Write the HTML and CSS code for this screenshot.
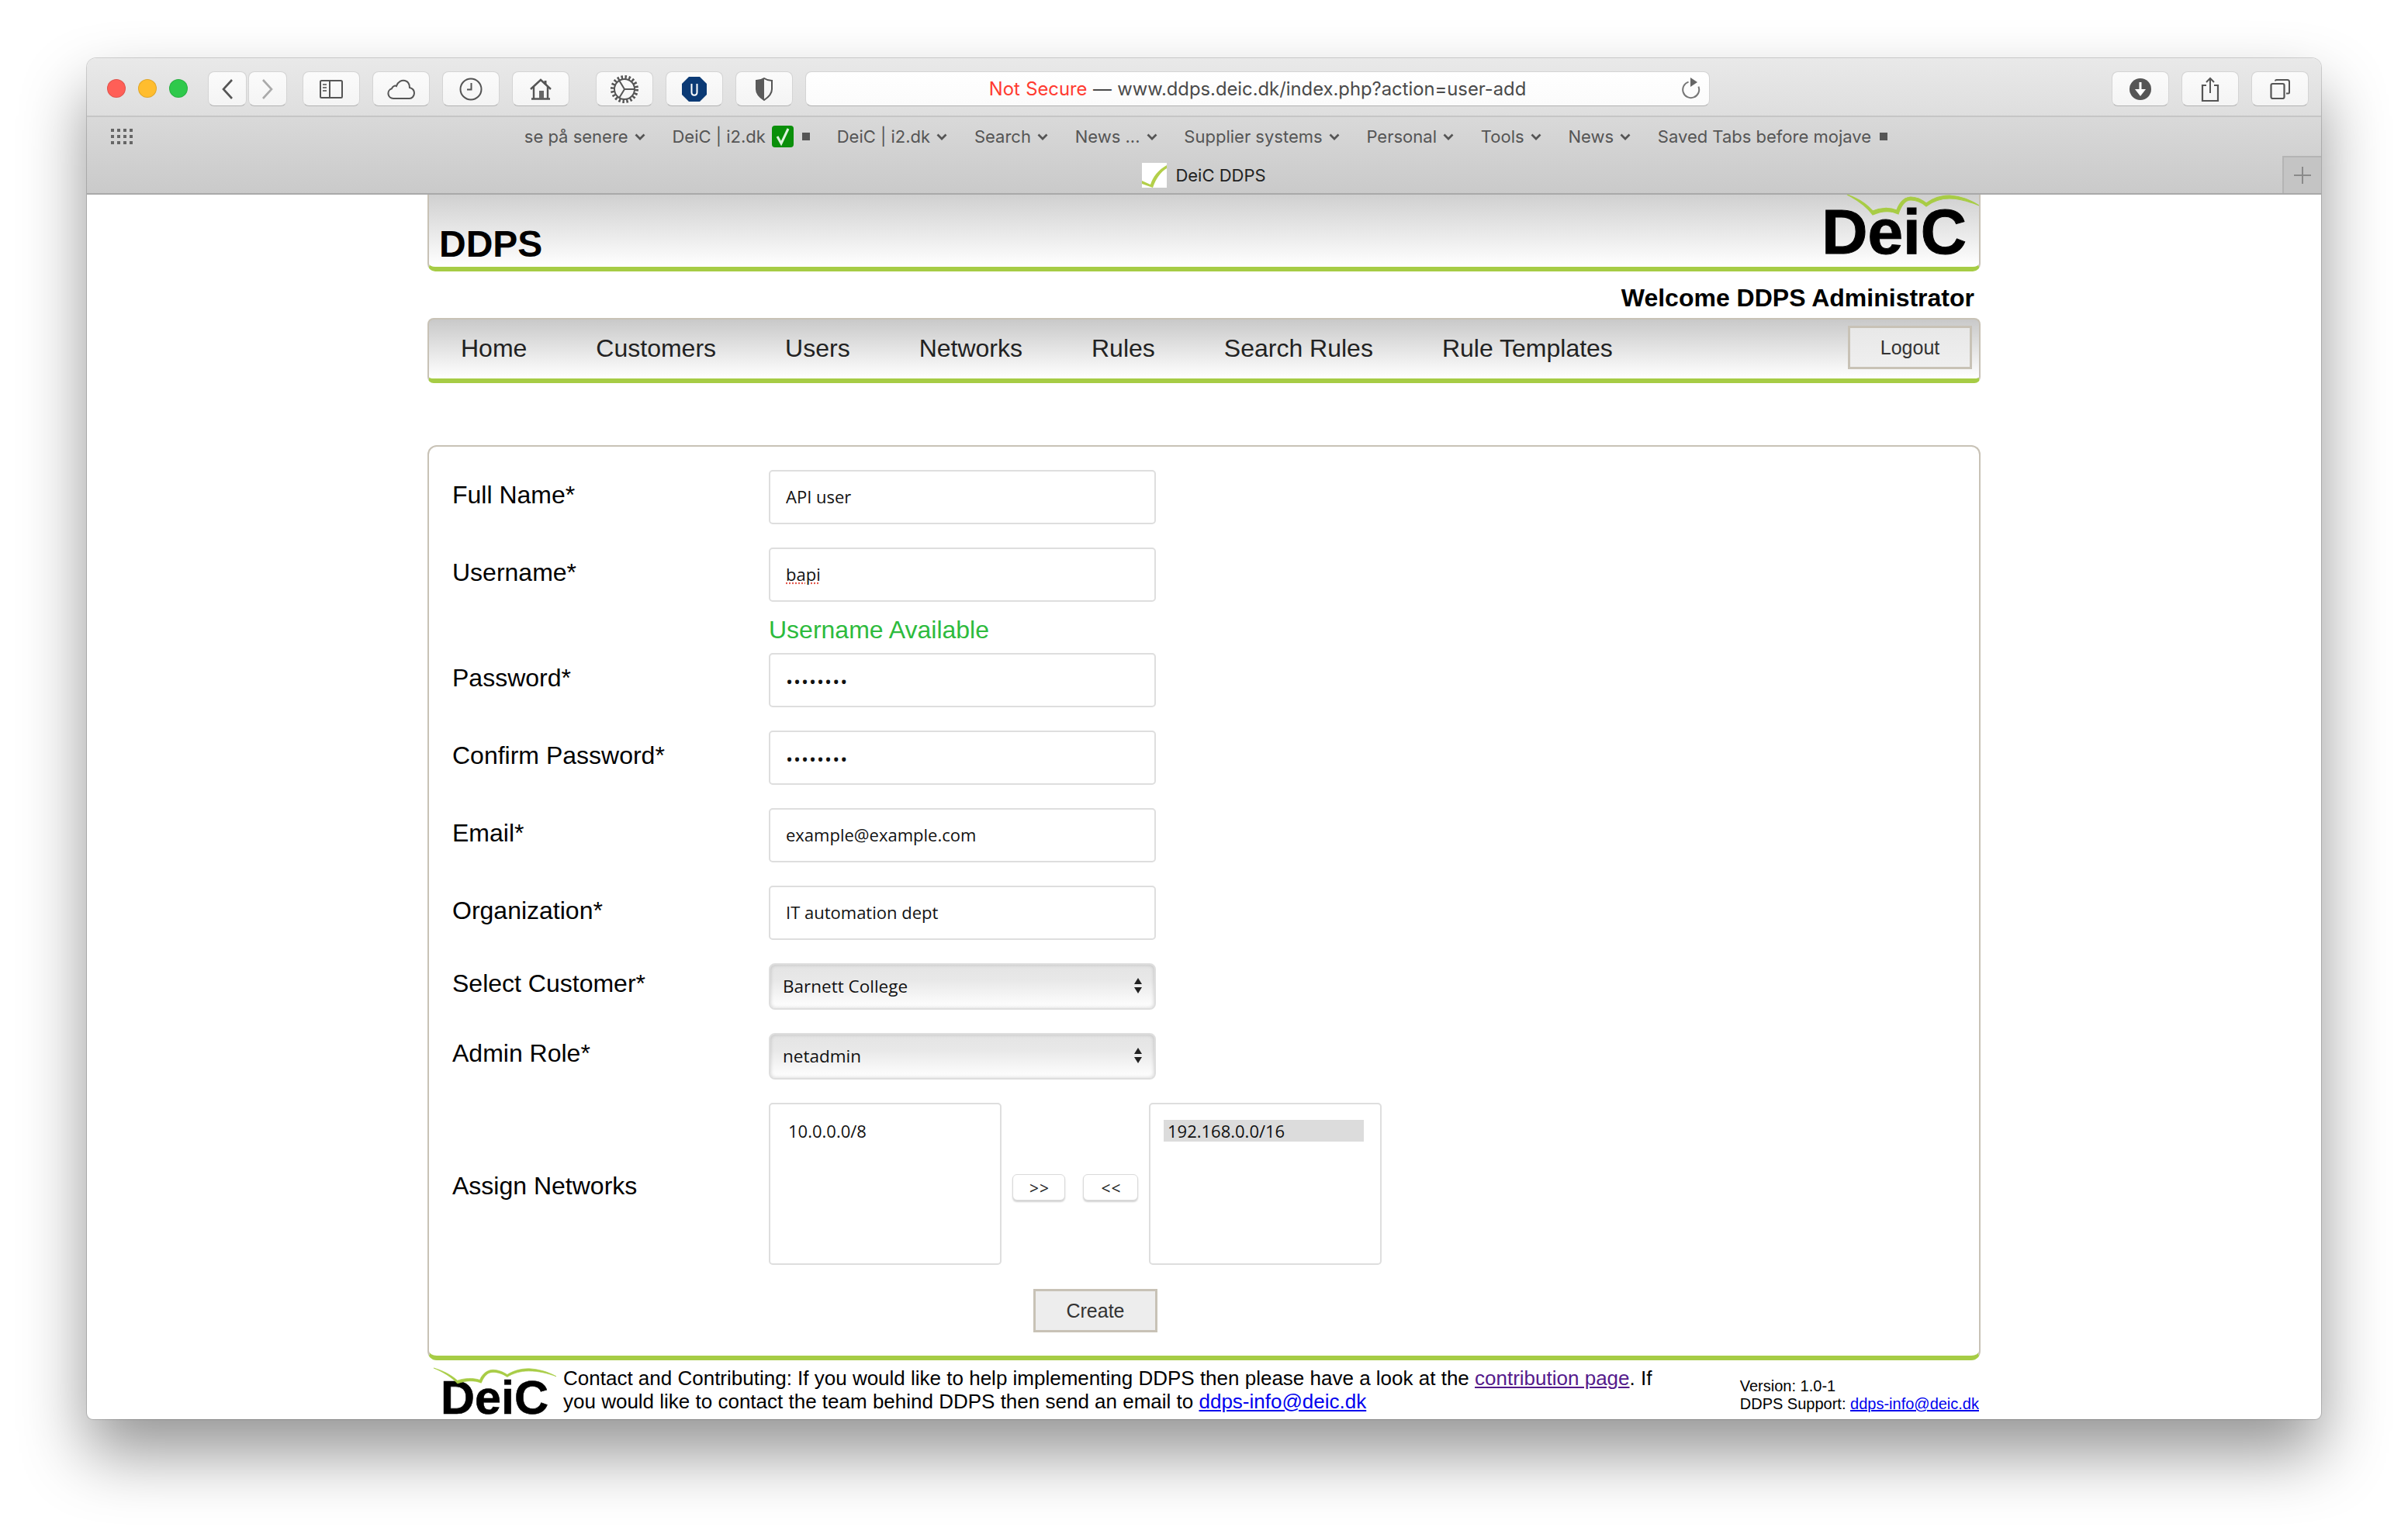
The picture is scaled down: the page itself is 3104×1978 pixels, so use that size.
FILE: index.html
```html
<!DOCTYPE html>
<html lang="en">
<head>
<meta charset="utf-8">
<title>DeiC DDPS</title>
<link rel="stylesheet" href="styles.css">
</head>
<body>
<div class="window">
  <div class="toolbar">
    <span class="light red"></span><span class="light yellow"></span><span class="light green"></span>
    <button class="tb nav first"><svg width="16" height="26" viewBox="0 0 16 26"><path d="M14 1 3 13l11 12" fill="none" stroke="#555" stroke-width="2.6"/></svg></button>
    <button class="tb nav second"><svg width="16" height="26" viewBox="0 0 16 26"><path d="M2 1l11 12L2 25" fill="none" stroke="#aaa" stroke-width="2.6"/></svg></button>
    <button class="tb wide"><svg width="30" height="24" viewBox="0 0 30 24"><rect x="1" y="1" width="28" height="22" rx="1.5" fill="none" stroke="#555" stroke-width="2"/><path d="M13 1v22" stroke="#555" stroke-width="2"/><path d="M4 6h5M4 10h5M4 14h5" stroke="#777" stroke-width="2"/></svg></button>
    <button class="tb"><svg width="36" height="26" viewBox="0 0 36 26"><path d="M8 25a6.500 6.500 0 0 1-2-12.700C7 9 10 8 12 9c2-6 7-8 11-7 4 1 6 5 6 9 4 1 6 4 6 7 0 4-3 7-6 7z" fill="none" stroke="#555" stroke-width="2"/></svg></button>
    <button class="tb"><svg width="30" height="30" viewBox="0 0 30 30"><circle cx="15" cy="15" r="13.500" fill="none" stroke="#555" stroke-width="2"/><path d="M15.500 7v8.500H10" fill="none" stroke="#555" stroke-width="2"/></svg></button>
    <button class="tb"><svg width="28" height="28" viewBox="0 0 28 28"><path d="M1 14 14 2l13 12" fill="none" stroke="#555" stroke-width="2.400"/><path d="M5 11v15M23 11v15M2 26.500h24" fill="none" stroke="#555" stroke-width="2.400"/><path d="M12 26V16h6v10z" fill="#666"/><path d="M20 3v5" stroke="#555" stroke-width="3"/></svg></button>
    <button class="tb gap"><svg width="38" height="38" viewBox="0 0 38 38"><circle cx="19" cy="19" r="15.500" fill="none" stroke="#555" stroke-width="5" stroke-dasharray="2.400 2.470"/><circle cx="19" cy="19" r="13" fill="none" stroke="#555" stroke-width="2"/><path d="M19 19h13M19 19 12 7.500M19 19l-7 11.500" fill="none" stroke="#555" stroke-width="2"/></svg></button>
    <button class="tb"><svg width="34" height="34" viewBox="0 0 34 34"><path d="M10 1h14l9 9v14l-9 9H10l-9-9V10z" fill="#0b3a75"/><path d="M13.500 10v11c0 5 7 5 7 0V10" fill="none" stroke="#fff" stroke-width="2"/></svg></button>
    <button class="tb"><svg width="24" height="30" viewBox="0 0 24 30"><path d="M12 1c3 2 7 3 10 3v11c0 6-4 10-10 14C6 25 2 21 2 15V4c3 0 7-1 10-3z" fill="none" stroke="#555" stroke-width="2"/><path d="M12 1C9 3 5 4 2 4v11c0 6 4 10 10 14z" fill="#5b5b5b"/></svg></button>
    <div class="address"><span class="addr-text"><span class="insecure">Not Secure</span> — www.ddps.deic.dk/index.php?action=user-add</span>
      <svg class="reload" width="24" height="28" viewBox="0 0 24 28"><path d="M12 5A10.500 10.500 0 1 0 22 15" fill="none" stroke="#777" stroke-width="2" transform="rotate(-20 12 15)"/><path d="M11 0l9 6-9 6z" fill="#666"/></svg>
    </div>
    <button class="tb"><svg width="30" height="30" viewBox="0 0 30 30"><circle cx="15" cy="15" r="14" fill="#555"/><path d="M15 6v12" stroke="#fff" stroke-width="3"/><path d="M8 15h14l-7 9z" fill="#fff"/></svg></button>
    <button class="tb"><svg width="24" height="32" viewBox="0 0 24 32"><path d="M7 11H2v20h20V11h-5" fill="none" stroke="#555" stroke-width="2.200"/><path d="M12 2v19M7 7l5-5 5 5" fill="none" stroke="#555" stroke-width="2"/></svg></button>
    <button class="tb"><svg width="26" height="26" viewBox="0 0 26 26"><rect x="1.500" y="6" width="17" height="19" rx="2" fill="none" stroke="#555" stroke-width="2.200"/><path d="M7 2.500c0-1 .5-1.500 1.500-1.500h14c1.500 0 2.500 1 2.500 2.500V17c0 1-.5 1.500-1.500 1.500H21" fill="none" stroke="#555" stroke-width="2"/></svg></button>
  </div>

  <div class="bookmarks">
    <svg class="apps" width="28" height="20" viewBox="0 0 28 20"><g fill="#666"><rect x="0" y="0" width="4" height="4"/><rect x="8" y="0" width="4" height="4"/><rect x="16" y="0" width="4" height="4"/><rect x="24" y="0" width="4" height="4"/><rect x="0" y="8" width="4" height="4"/><rect x="8" y="8" width="4" height="4"/><rect x="16" y="8" width="4" height="4"/><rect x="24" y="8" width="4" height="4"/><rect x="0" y="16" width="4" height="4"/><rect x="8" y="16" width="4" height="4"/><rect x="16" y="16" width="4" height="4"/><rect x="24" y="16" width="4" height="4"/></g></svg>
    <span class="bm">se på senere<svg class="chev" width="14" height="9" viewBox="0 0 14 9"><path d="M1.500 1.500 7 7l5.500-5.500" fill="none" stroke="#555" stroke-width="2.700"/></svg></span>
    <span class="bm">DeiC | i2.dk<svg width="28" height="28" viewBox="0 0 28 28"><rect width="28" height="28" rx="4" fill="#0a8f0a"/><path d="M7 14l5 9L21 4" fill="none" stroke="#dff3df" stroke-width="3"/></svg><span class="sq"></span></span>
    <span class="bm">DeiC | i2.dk<svg class="chev" width="14" height="9" viewBox="0 0 14 9"><path d="M1.500 1.500 7 7l5.500-5.500" fill="none" stroke="#555" stroke-width="2.700"/></svg></span>
    <span class="bm">Search<svg class="chev" width="14" height="9" viewBox="0 0 14 9"><path d="M1.500 1.500 7 7l5.500-5.500" fill="none" stroke="#555" stroke-width="2.700"/></svg></span>
    <span class="bm">News ...<svg class="chev" width="14" height="9" viewBox="0 0 14 9"><path d="M1.500 1.500 7 7l5.500-5.500" fill="none" stroke="#555" stroke-width="2.700"/></svg></span>
    <span class="bm">Supplier systems<svg class="chev" width="14" height="9" viewBox="0 0 14 9"><path d="M1.500 1.500 7 7l5.500-5.500" fill="none" stroke="#555" stroke-width="2.700"/></svg></span>
    <span class="bm">Personal<svg class="chev" width="14" height="9" viewBox="0 0 14 9"><path d="M1.500 1.500 7 7l5.500-5.500" fill="none" stroke="#555" stroke-width="2.700"/></svg></span>
    <span class="bm">Tools<svg class="chev" width="14" height="9" viewBox="0 0 14 9"><path d="M1.500 1.500 7 7l5.500-5.500" fill="none" stroke="#555" stroke-width="2.700"/></svg></span>
    <span class="bm">News<svg class="chev" width="14" height="9" viewBox="0 0 14 9"><path d="M1.500 1.500 7 7l5.500-5.500" fill="none" stroke="#555" stroke-width="2.700"/></svg></span>
    <span class="bm">Saved Tabs before mojave<span class="sq"></span></span>
  </div>

  <div class="tabbar">
    <div class="tab"><svg width="32" height="32" viewBox="0 0 32 32"><rect width="32" height="32" fill="#fff"/><path d="M0 23l11 5c3-10 10-19 21-25v4C24 12 18 20 14 32L0 27z" fill="#b3cf4a"/></svg><span>DeiC DDPS</span></div>
    <div class="newtab"><svg width="22" height="22" viewBox="0 0 22 22"><path d="M11 0v22M0 11h22" stroke="#8a8a8a" stroke-width="2"/></svg></div>
  </div>

  <div class="page">
    <header class="site-header">
      <h1>DDPS</h1>
      <div class="logo logo-big"><svg class="swoosh" viewBox="0 0 170 26" preserveAspectRatio="none"><path d="M0 0C12 4 24 11 33 21 42 17 54 16 64 20 68 8 76 3 82 3 90 3 97 7 102 11 110 5 120 1 132 1 146 2 158 6 170 14 158 9 146 5 132 5 120 5 110 9 102 15 96 10 90 7 82 7 75 7 70 13 66 25 56 20 44 21 33 26 25 15 12 6 0 0Z" fill="#a8cc45" stroke="#a8cc45" stroke-width="1.200"/></svg><span>DeiC</span></div>
    </header>
    <div class="welcome">Welcome DDPS Administrator</div>
    <nav class="site-nav">
      <a>Home</a><a>Customers</a><a>Users</a><a>Networks</a><a>Rules</a><a>Search Rules</a><a>Rule Templates</a>
      <button class="plain logout">Logout</button>
    </nav>

    <form class="panel">
      <div class="row"><label>Full Name*</label><input class="field" value="API user"></div>
      <div class="row tight"><label>Username*</label><input class="field typo" value="bapi"></div>
      <div class="status">Username Available</div>
      <div class="row"><label>Password*</label><input class="field pass" type="password" value="12345678"></div>
      <div class="row"><label>Confirm Password*</label><input class="field pass" type="password" value="12345678"></div>
      <div class="row"><label>Email*</label><input class="field" value="example@example.com"></div>
      <div class="row"><label>Organization*</label><input class="field" value="IT automation dept"></div>
      <div class="row sel"><label>Select Customer*</label><div class="select">Barnett College<svg width="10" height="20" viewBox="0 0 10 20"><path d="M5 0l5 8H0zM5 20 0 12h10z" fill="#222"/></svg></div></div>
      <div class="row sel"><label>Admin Role*</label><div class="select">netadmin<svg width="10" height="20" viewBox="0 0 10 20"><path d="M5 0l5 8H0zM5 20 0 12h10z" fill="#222"/></svg></div></div>
      <div class="row assign">
        <label>Assign Networks</label>
        <div class="list"><div class="opt">10.0.0.0/8</div></div>
        <div class="movers"><button type="button" class="mv">&gt;&gt;</button><button type="button" class="mv back">&lt;&lt;</button></div>
        <div class="list"><div class="opt on">192.168.0.0/16</div></div>
      </div>
      <div class="actions"><button type="button" class="plain create">Create</button></div>
    </form>

    <footer class="site-footer">
      <div class="logo logo-small"><svg class="swoosh" viewBox="0 0 170 26" preserveAspectRatio="none"><path d="M0 0C12 4 24 11 33 21 42 17 54 16 64 20 68 8 76 3 82 3 90 3 97 7 102 11 110 5 120 1 132 1 146 2 158 6 170 14 158 9 146 5 132 5 120 5 110 9 102 15 96 10 90 7 82 7 75 7 70 13 66 25 56 20 44 21 33 26 25 15 12 6 0 0Z" fill="#a8cc45" stroke="#a8cc45" stroke-width=".8"/></svg><span>DeiC</span></div>
      <p class="contact">Contact and Contributing: If you would like to help implementing DDPS then please have a look at the <a class="visited">contribution page</a>. If<br>you would like to contact the team behind DDPS then send an email to <a class="link">ddps-info@deic.dk</a></p>
      <p class="version">Version: 1.0-1<br>DDPS Support: <a class="link">ddps-info@deic.dk</a></p>
    </footer>
  </div>
</div>
</body>
</html>
```

FILE: styles.css
```css
* { box-sizing: border-box; }
html, body { margin: 0; height: 1978px; background: #fff; overflow: hidden; }
body { padding: 75px 0 0 112px; font-family: "Liberation Sans", Arial, sans-serif; }

.window {
  width: 2880px; height: 1755px; background: #fff;
  border-radius: 12px 12px 8px 8px;
  box-shadow: 0 44px 84px rgba(0,0,0,.42), 0 0 0 1px rgba(0,0,0,.16);
  display: flex; flex-direction: column;
}

.toolbar {
  height: 76px; flex: none; display: flex; align-items: flex-start;
  padding: 17px 16px 0 26px;
  background: linear-gradient(#e9e9e9, #dedede);
  border-bottom: 2px solid #c6c6c6;
  border-radius: 12px 12px 0 0;
}
.light { width: 24px; height: 24px; border-radius: 50%; margin: 10px 16px 0 0; border: 1px solid rgba(0,0,0,.12); }
.red { background: #ff5f57; }
.yellow { background: #ffbd2e; }
.green { background: #2ec94b; margin-right: 26px; }
.tb {
  width: 74px; height: 45px; flex: none; margin: 0 16px 0 0; padding: 0;
  display: flex; align-items: center; justify-content: center;
  background: linear-gradient(#fbfbfb, #f4f4f4);
  border: 1px solid #d4d4d4; border-bottom-color: #b2b2b2; border-radius: 8px;
}
.tb:last-child { margin-right: 0; }
.nav { width: 50px; margin-right: 2px; }
.second { margin-right: 20px; }
.gap { margin-left: 18px; }
.address {
  position: relative; flex: 1; height: 45px; margin-right: 518px;
  display: flex; align-items: center; justify-content: center;
  background: linear-gradient(#fff, #fbfbfb);
  border: 1px solid #d4d4d4; border-bottom-color: #b2b2b2; border-radius: 8px;
  font: 23.800px/1 Inter, sans-serif; word-spacing: .8px; color: #4a4a4a;
}
.addr-text { padding-top: 1px; }
.insecure { color: #ff3b30; }
.reload { position: absolute; right: 11px; top: 7px; }

.bookmarks {
  height: 50px; flex: none; display: flex; align-items: center; gap: 34.800px;
  padding-left: 31px;
  background: linear-gradient(#d9d9d9, #d1d1d1);
  font: 22px/1 Inter, sans-serif; color: #555;
}
.apps { margin-right: 470px; }
.bm { display: flex; align-items: center; gap: 8px; white-space: nowrap; }
.sq { width: 10px; height: 10px; background: #555; margin-left: 3px; }

.tabbar {
  height: 50px; flex: none; display: flex; align-items: center; justify-content: center; position: relative;
  background: linear-gradient(#d1d1d1, #cacaca);
  border-bottom: 2px solid #a9a9a9;
  font: 22px/1 Inter, sans-serif; color: #222;
}
.tab { display: flex; align-items: center; gap: 11px; padding-top: 1px; }
.newtab {
  position: absolute; right: 0; top: 0; width: 50px; height: 48px;
  display: flex; align-items: center; justify-content: center;
  background: #c4c4c4; border-left: 2px solid #b4b4b4; border-top: 2px solid #b4b4b4;
}

.page { width: 2002px; margin: 0 auto; color: #000; }
.site-header {
  height: 99px; display: flex; justify-content: space-between; align-items: flex-end;
  padding: 0 7px 0 13px; overflow: hidden;
  background: linear-gradient(#d0d0d0, #fff);
  border: solid #c8c2b6; border-width: 0 2px 6px; border-bottom-color: #a6cc45;
  border-radius: 0 0 10px 10px;
}
h1 { margin: 0 0 5px; font-size: 48px; line-height: 48px; font-weight: bold; }
.logo { position: relative; font-weight: bold; color: #000; white-space: nowrap; }
.logo span { display: block; }
.swoosh { position: absolute; display: block; overflow: visible; }
.logo-big { font-size: 82px; line-height: 70px; margin: 0 9px 10px 0; -webkit-text-stroke: 1px #000; }
.logo-big .swoosh { left: 33px; top: -13px; width: 170px; height: 26px; }
.welcome { height: 60px; display: flex; align-items: center; justify-content: flex-end; padding: 8px 8px 0 0; font-size: 32px; font-weight: bold; }

.site-nav {
  height: 84px; display: flex; align-items: center; padding: 0 9px 2px 41px;
  background: linear-gradient(#c9c9c9, #fff);
  border: solid #c8c2b6; border-width: 2px 2px 6px; border-bottom-color: #a6cc45;
  border-radius: 8px;
  font-size: 32px; color: #222;
}
.site-nav a { margin-right: 89px; white-space: nowrap; }
.plain { background: #ededed; border: 3px solid #c8c2b6; font: 25px "Liberation Sans", Arial, sans-serif; color: #333; padding: 0; }
.logout { width: 160px; height: 56px; margin: 0 0 2px auto; background: linear-gradient(#e8e8e8, #efefef); }

.panel {
  margin-top: 80px; height: 1180px; padding: 30px 30px 0;
  border: solid #c8c2b6; border-width: 2px 2px 6px; border-bottom-color: #a6cc45;
  border-radius: 12px; background: #fff;
}
.row { display: flex; align-items: flex-start; margin-bottom: 30px; font-size: 32px; }
.row.tight { margin-bottom: 0; }
.row label { width: 408px; flex: none; line-height: 64px; }
.field {
  width: 499px; height: 70px; padding: 0 20px 2px; margin: 0;
  border: 2px solid #dedede; border-radius: 5px; background: #fff;
  font: 22px "Open Sans", sans-serif; color: #111; outline: none;
}
.pass { padding: 2px 20px 0; font-size: 24px; letter-spacing: 1px; }
.typo { text-decoration: underline dotted #e2574c; }
.status { height: 66px; margin-left: 408px; color: #2dbb3d; font-size: 32px; line-height: 72px; }
.sel label { line-height: 52px; }
.select {
  position: relative; width: 499px; height: 60px; padding: 0 16px 2px; display: flex; align-items: center; justify-content: space-between;
  border: 2px solid #dedede; border-radius: 8px;
  background: linear-gradient(#e4e4e4, #e8e8e8 35%, #fff);
  box-shadow: inset 0 0 5px rgba(0,0,0,.18);
  font: 22.500px "Open Sans", sans-serif; color: #111;
}
.assign { align-items: center; height: 209px; margin-bottom: 31px; }
.assign label { line-height: 1; padding-top: 4px; }
.list { width: 300px; height: 209px; padding: 20px 21px 0 17px; border: 2px solid #dedede; border-radius: 5px; font: 22px "Open Sans", sans-serif; color: #111; }
.list .opt { height: 28px; line-height: 28px; padding-left: 6px; }
.list .opt.on { padding-left: 5px; background: #dcdcdc; }
.movers { width: 190px; display: flex; padding: 8px 0 0 14px; gap: 23px; align-self: center; }
.mv { width: 68px; height: 34px; padding: 3px 0 0 2px; background: #fff; border: 1px solid #dadada; border-radius: 6px; box-shadow: 0 2px 2px rgba(0,0,0,.18); font: 21px/1 "Open Sans", sans-serif; letter-spacing: 1px; color: #222; }
.mv.back { width: 71px; }
.actions { padding-left: 749px; }
.create { width: 160px; height: 56px; display: block; }

.site-footer { display: flex; align-items: flex-start; height: 76px; }
.logo-small { width: 160px; margin: 0 0 0 6px; font-size: 61px; line-height: 44px; padding: 26px 0 0 11px; flex: none; -webkit-text-stroke: .6px #000; }
.logo-small .swoosh { left: 2px; top: 10px; width: 158px; height: 20px; }
.contact { margin: 9px 0 0 9px; font-size: 26px; line-height: 29.500px; white-space: nowrap; flex: none; }
.version { margin: 22px 2px 0 auto; font-size: 20px; line-height: 23px; white-space: nowrap; }
.visited { color: #551a8b; text-decoration: underline; }
.link { color: #0000ee; text-decoration: underline; }
```
